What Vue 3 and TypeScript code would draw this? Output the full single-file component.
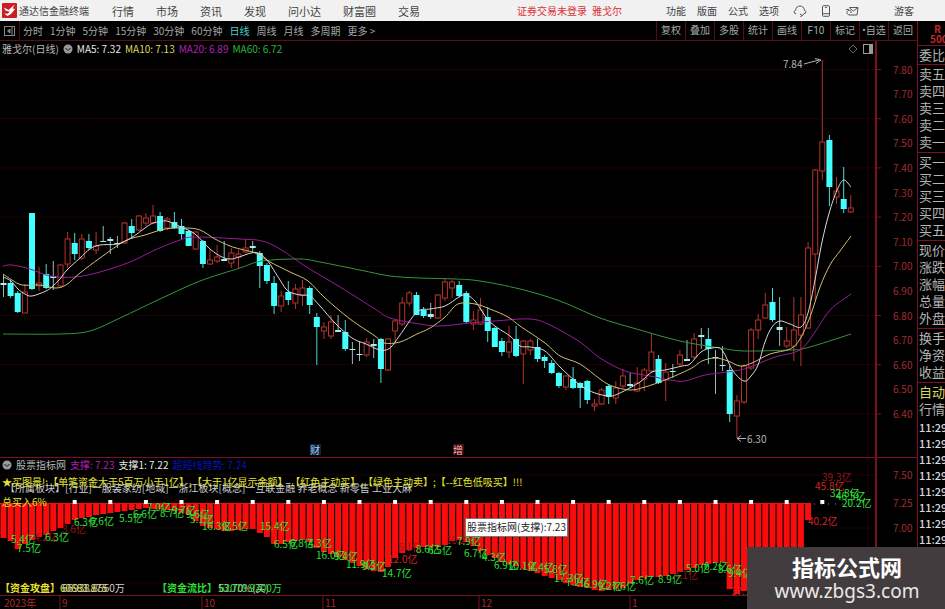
<script setup lang="ts">
type Point = [number, number]
type Kind = 'up' | 'down' | 'flat'
// kind, body top, body bottom, high, low
type Candle = [Kind, number, number, number, number]
type Tag = [number, number, string, 'g' | 'r' | 'd']

const menu = ['行情', '市场', '资讯', '发现', '问小达', '财富圈', '交易']
const account = ['功能', '版面', '公式', '选项']
const periods = ['分时', '1分钟', '5分钟', '15分钟', '30分钟', '60分钟', '日线', '周线', '月线', '多周期', '更多 >']
const tools = ['复权', '叠加', '多股', '统计', '画线', 'F10', '标记', '•自选', '返回']
const quotes = [
  ['委比'],
  ['卖五', '卖四', '卖三', '卖二', '卖一'],
  ['买一', '买二', '买三', '买四', '买五'],
  ['现价', '涨跌', '涨幅', '总量', '外盘'],
  ['换手', '净资', '收益'],
]
const ticks = Array.from({ length: 8 }, () => '11:29')

const step = 7.12
const cx = (i: number): number => Math.round((3.5 + i * step) * 10) / 10

const candles: Candle[] = [
  ['flat', 283, 285, 275, 297], ['down', 283, 296, 280, 298], ['down', 293, 312, 291, 313], ['up', 292, 313, 284, 313],
  ['down', 213, 289, 213, 290], ['up', 283, 286, 267, 291], ['down', 274, 288, 264, 289], ['flat', 276, 278, 261, 290],
  ['up', 265, 286, 264, 288], ['up', 239, 264, 232, 268], ['down', 243, 254, 233, 260], ['up', 239, 258, 234, 260],
  ['down', 241, 248, 234, 250], ['up', 246, 250, 232, 254], ['flat', 241, 242, 226, 242], ['flat', 239, 241, 237, 254],
  ['flat', 243, 244, 236, 248], ['up', 223, 243, 222, 244], ['down', 226, 233, 219, 238], ['up', 216, 230, 215, 231],
  ['up', 218, 223, 213, 226], ['up', 216, 223, 205, 224], ['down', 216, 231, 212, 232], ['up', 219, 228, 217, 230],
  ['down', 222, 228, 212, 229], ['down', 226, 234, 219, 239], ['down', 231, 246, 230, 246], ['up', 232, 249, 231, 250],
  ['down', 241, 264, 240, 268], ['up', 260, 264, 249, 265], ['up', 257, 261, 245, 263], ['flat', 259, 261, 241, 261],
  ['up', 253, 263, 248, 268], ['up', 254, 257, 250, 268], ['up', 248, 252, 239, 253], ['flat', 246, 248, 241, 252],
  ['down', 253, 266, 251, 288], ['down', 265, 281, 263, 284], ['down', 283, 306, 276, 314], ['up', 296, 306, 291, 312],
  ['down', 292, 300, 281, 305], ['up', 289, 303, 284, 309], ['up', 288, 295, 280, 306], ['down', 288, 305, 286, 314],
  ['down', 317, 327, 313, 365], ['up', 327, 331, 322, 339], ['up', 322, 336, 315, 339], ['flat', 330, 332, 315, 332],
  ['down', 332, 349, 320, 351], ['flat', 349, 350, 342, 364], ['flat', 354, 355, 341, 361], ['up', 342, 355, 338, 357],
  ['flat', 344, 346, 339, 358], ['down', 339, 369, 338, 383], ['up', 339, 370, 338, 371], ['up', 321, 331, 320, 342],
  ['up', 303, 324, 297, 326], ['up', 293, 303, 291, 306], ['down', 295, 315, 292, 315], ['down', 310, 316, 307, 318],
  ['flat', 314, 317, 303, 319], ['up', 295, 318, 294, 319], ['up', 282, 298, 278, 301], ['up', 282, 288, 280, 298],
  ['down', 285, 296, 281, 297], ['down', 293, 322, 291, 323], ['up', 320, 324, 311, 330], ['up', 310, 324, 298, 325],
  ['down', 317, 331, 307, 342], ['down', 328, 347, 327, 347], ['down', 341, 352, 338, 356], ['up', 342, 352, 326, 358],
  ['down', 339, 356, 326, 357], ['up', 341, 354, 340, 384], ['up', 341, 350, 339, 355], ['down', 347, 359, 339, 362],
  ['down', 357, 361, 355, 368], ['down', 363, 373, 360, 374], ['down', 373, 386, 372, 388], ['up', 376, 387, 375, 390],
  ['down', 379, 388, 367, 389], ['down', 383, 388, 382, 408], ['down', 381, 400, 380, 404], ['up', 404, 406, 399, 411],
  ['up', 390, 404, 388, 405], ['down', 386, 397, 384, 404], ['up', 388, 398, 381, 404], ['up', 376, 386, 369, 388],
  ['flat', 384, 386, 373, 388], ['up', 383, 391, 367, 392], ['up', 370, 379, 368, 391], ['up', 352, 371, 334, 373],
  ['down', 359, 383, 355, 384], ['up', 372, 380, 363, 401], ['flat', 371, 372, 364, 378], ['up', 355, 364, 350, 366],
  ['flat', 359, 361, 340, 361], ['up', 339, 357, 333, 359], ['flat', 335, 337, 328, 349], ['down', 339, 349, 328, 364],
  ['flat', 357, 358, 350, 394], ['flat', 365, 366, 346, 371], ['down', 370, 414, 366, 422], ['up', 401, 416, 395, 438],
  ['up', 366, 402, 364, 404], ['up', 330, 368, 328, 370], ['up', 320, 330, 314, 339], ['up', 305, 318, 293, 319],
  ['down', 302, 320, 288, 322], ['flat', 327, 330, 297, 346], ['up', 341, 346, 327, 348], ['up', 330, 346, 297, 361],
  ['up', 315, 335, 297, 366], ['up', 248, 328, 242, 329], ['up', 170, 254, 169, 300], ['up', 142, 171, 60, 180],
  ['down', 140, 187, 135, 206], ['up', 191, 197, 177, 204], ['down', 199, 209, 167, 213], ['up', 208, 212, 195, 213],
]

const ma5: Point[] = [[3, 277], [11, 281], [18, 289], [25, 294], [32, 296], [46, 291], [53, 286], [60, 279], [67, 270], [80, 258], [90, 249], [100, 245], [117, 244], [131, 238], [145, 228], [153, 223], [160, 222], [167, 221], [181, 227], [195, 234], [210, 249], [222, 257], [231, 259], [239, 257], [251, 253], [258, 253], [267, 260], [280, 280], [288, 291], [300, 295], [310, 296], [320, 306], [335, 323], [352, 338], [366, 344], [380, 350], [390, 348], [400, 335], [417, 312], [430, 309], [445, 306], [459, 297], [466, 295], [475, 301], [490, 322], [510, 336], [520, 346], [530, 347], [545, 351], [560, 367], [580, 385], [595, 393], [610, 396], [620, 393], [640, 382], [652, 372], [665, 370], [682, 366], [690, 364], [701, 352], [712, 348], [722, 350], [733, 371], [744, 381], [751, 376], [758, 365], [765, 342], [772, 327], [780, 321], [790, 324], [801, 327], [808, 313], [815, 280], [822, 242], [830, 210], [838, 188], [844, 180], [851, 187]]
const ma10: Point[] = [[3, 274], [12, 280], [22, 285], [40, 285], [55, 288], [66, 285], [80, 273], [100, 258], [125, 241], [145, 235], [165, 229], [185, 228], [200, 230], [215, 239], [230, 246], [240, 249], [255, 253], [270, 262], [290, 272], [308, 281], [325, 298], [350, 319], [375, 336], [384, 343], [400, 342], [417, 334], [430, 328], [445, 317], [458, 304], [475, 304], [490, 309], [508, 317], [520, 326], [545, 343], [560, 356], [580, 364], [600, 379], [612, 386], [630, 390], [645, 387], [665, 380], [690, 369], [702, 361], [715, 358], [728, 361], [740, 366], [752, 363], [770, 354], [790, 349], [800, 339], [810, 317], [820, 287], [830, 265], [840, 251], [851, 236]]
const ma20: Point[] = [[3, 266], [12, 265], [30, 269], [50, 276], [75, 277], [100, 272], [130, 262], [155, 250], [180, 240], [195, 237], [240, 239], [262, 241], [280, 249], [305, 266], [340, 287], [375, 309], [390, 318], [420, 324], [440, 326], [470, 323], [495, 321], [530, 319], [550, 325], [580, 342], [600, 358], [625, 371], [650, 376], [670, 380], [685, 381], [705, 375], [735, 371], [750, 367], [775, 357], [800, 350], [815, 332], [830, 310], [851, 294]]
const ma60: Point[] = [[3, 334], [60, 334], [90, 331], [120, 318], [160, 299], [200, 281], [240, 268], [262, 261], [300, 259], [320, 262], [360, 270], [390, 276], [420, 278], [455, 279], [480, 281], [520, 289], [560, 301], [600, 318], [640, 330], [680, 341], [720, 348], [745, 351], [790, 350], [802, 349], [820, 344], [851, 334]]

const toPath = (pts: Point[]): string => {
  let d = `M${pts[0][0]} ${pts[0][1]}`
  for (let i = 0; i < pts.length - 1; i++) {
    const a = pts[Math.max(0, i - 1)]
    const b = pts[i]
    const c = pts[i + 1]
    const e = pts[Math.min(pts.length - 1, i + 2)]
    d += `C${b[0] + (c[0] - a[0]) / 6} ${b[1] + (c[1] - a[1]) / 6} ${c[0] - (e[0] - b[0]) / 6} ${c[1] - (e[1] - b[1]) / 6} ${c[0]} ${c[1]}`
  }
  return d
}

const lines = [
  { id: 'ma60', d: toPath(ma60) },
  { id: 'ma20', d: toPath(ma20) },
  { id: 'ma10', d: toPath(ma10) },
  { id: 'ma5', d: toPath(ma5) },
]

const prices = Array.from({ length: 15 }, (_, i) => ({ label: (7.8 - i * 0.1).toFixed(2), y: 69.5 + i * 24.6, line: i % 2 === 0 }))

const floor: Point[] = [[0, 537], [10, 540], [17, 549], [24, 545], [32, 540], [46, 535], [60, 528], [75, 520], [95, 515], [120, 512], [146, 508], [170, 510], [188, 514], [202, 526], [225, 531], [252, 529], [265, 535], [275, 545], [305, 539], [320, 550], [345, 560], [372, 571], [384, 573], [392, 561], [404, 551], [420, 547], [440, 547], [455, 540], [464, 540], [480, 551], [500, 561], [530, 571], [555, 579], [580, 587], [600, 591], [622, 588], [640, 578], [665, 576], [690, 569], [705, 564], [728, 562], [730, 594], [738, 594], [745, 590], [803, 585], [804, 520], [812, 520]]
const floorAt = (x: number): number => {
  const k = floor.findIndex((p) => p[0] >= x)
  if (k <= 0) return floor[0][1]
  const [x0, y0] = floor[k - 1]
  const [x1, y1] = floor[k]
  return Math.round(y0 + ((x - x0) / (x1 - x0)) * (y1 - y0))
}
const bars = Array.from({ length: 114 }, (_, i) => ({ x: cx(i) - 3, h: floorAt(cx(i)) - 503 }))
const marks = Array.from({ length: 22 }, (_, i) => cx(10 + i * 5) - 2)

const tags: Tag[] = [
  [11, 543, '5.4亿', 'g'], [17, 552, '7.5亿', 'g'], [34, 541, '4.2亿', 'd'], [45, 541, '6.3亿', 'g'], [62, 533, '3.6亿', 'd'],
  [74, 526, '6.3亿', 'g'], [90, 525, '6.6亿', 'g'], [119, 522, '5.5亿', 'g'], [133, 518, '6.6亿', 'g'], [147, 511, '7.0亿', 'g'],
  [160, 517, '8.7亿', 'g'], [172, 514, '9.7亿', 'g'], [186, 518, '9.6亿', 'g'], [190, 523, '5.1亿', 'g'], [202, 530, '16.3亿', 'g'],
  [224, 530, '8.5亿', 'g'], [260, 530, '15.4亿', 'g'], [274, 548, '6.5亿', 'g'], [290, 547, '6.8亿', 'g'], [308, 547, '4.3亿', 'g'],
  [316, 559, '16.0亿', 'g'], [334, 560, '9.4亿', 'g'], [346, 568, '11.9亿', 'g'], [362, 570, '9.3亿', 'g'], [382, 577, '14.7亿', 'g'],
  [388, 563, '12.0亿', 'r'], [398, 551, '6.1亿', 'd'], [416, 553, '8.6亿', 'g'], [428, 554, '6.5亿', 'g'], [446, 544, '10.2亿', 'd'],
  [457, 545, '7.9亿', 'g'], [464, 557, '6.7亿', 'g'], [482, 561, '4.3亿', 'g'], [494, 569, '6.9亿', 'g'], [508, 570, '10.1亿', 'g'],
  [530, 571, '4.4亿', 'g'], [544, 573, '5.8亿', 'g'], [554, 582, '17.3亿', 'g'], [566, 586, '7.2亿', 'g'], [584, 588, '6.9亿', 'g'],
  [598, 590, '9.2亿', 'g'], [612, 590, '7.6亿', 'g'], [630, 584, '7.6亿', 'g'], [658, 583, '8.9亿', 'g'], [674, 579, '4.1亿', 'd'],
  [686, 572, '5.0亿', 'g'], [704, 570, '6.2亿', 'g'], [718, 573, '8.6亿', 'g'], [728, 577, '9.4亿', 'g'], [731, 595, '17.1亿', 'r'],
  [822, 481, '39.3亿', 'd'], [815, 490, '45.8亿', 'r'], [830, 497, '32.8亿', 'g'], [836, 500, '46.5亿', 'g'], [842, 507, '20.2亿', 'g'],
  [808, 525, '40.2亿', 'r'],
]
const months = [
  { x: 60, label: '9' }, { x: 202, label: '10' }, { x: 323, label: '11' }, { x: 479, label: '12' }, { x: 630, label: '1' },
]
</script>

<template>
  <div class="terminal">
    <header class="topbar">
      <svg class="logo" viewBox="0 0 15 15" aria-hidden="true">
        <rect width="15" height="15" rx="1" fill="#c91e22" />
        <path d="M2 4.5 6.5 7 12.8 1.5 10.6 5.5 13 6 9 11 5.4 13 2.2 10.5 5.5 10.7 7.8 8.7 3.4 7.6Z" fill="#fff" />
      </svg>
      <span class="brand">通达信金融终端</span>
      <nav class="menu"><button v-for="m in menu" :key="m" type="button">{{ m }}</button></nav>
      <div class="login"><span>证券交易未登录</span><span>雅戈尔</span></div>
      <nav class="account">
        <button v-for="a in account" :key="a" type="button">{{ a }}</button>
      </nav>
      <div class="icons">
        <button type="button" aria-label="客服">
          <svg width="14" height="12" viewBox="0 0 14 12"><path d="M3 8.5H1.8L1 6.8 2.6 5C3 2.4 4.7 1 7 1s4 1.4 4.4 4L13 6.8 12.2 8.5H11L9.5 10.5M7 9.2l2.5 1.3L7.200 11.8" /></svg>
        </button>
        <button type="button" aria-label="手机">
          <svg width="10" height="12" viewBox="0 0 10 12"><rect x="1.5" y=".7" width="7" height="10.6" rx="1" /><path d="M1.5 8.7h7M4 2.4h2" /></svg>
        </button>
        <button type="button" aria-label="邮件">
          <svg width="14" height="12" viewBox="0 0 14 12"><path d="M4.500 2.500h8.500l-1 7.500H5C3 10 2 9 2 7.500S3.200 5.500 4.500 5.500s2 1 1.500 2.500M4.500 3l3.800 3L13 2.500M1 4.500h3" /></svg>
        </button>
      </div>
      <button class="guest" type="button">游客</button>
    </header>

    <div class="body">
      <main class="charts">
        <div class="toolbar">
          <button class="toggle" type="button" aria-label="侧栏">
            <svg width="11" height="10" viewBox="0 0 11 10"><rect x=".5" y=".5" width="10" height="9" fill="none" stroke="#888" /><path d="M8 1v8M6 3v4L3.5 5Z" fill="#888" stroke="#888" /></svg>
          </button>
          <nav class="periods">
            <button v-for="p in periods" :key="p" type="button" :class="{ active: p === '日线' }">{{ p }}</button>
          </nav>
          <nav class="tools"><button v-for="t in tools" :key="t" type="button">{{ t }}</button></nav>
        </div>

        <section class="panel">
          <div class="legend">
            <span class="name">雅戈尔(日线)</span>
            <svg class="dot" viewBox="0 0 10 10"><circle cx="5" cy="5" r="4.5" fill="#999" /><path d="M2.5 4 5 6.5 7.5 4" fill="none" stroke="#111" /></svg>
            <span class="white">MA5: 7.32</span><span class="yellow">MA10: 7.13</span><span class="magenta">MA20: 6.89</span><span class="green">MA60: 6.72</span>
            <span class="corner">
              <svg viewBox="0 0 26 10"><path d="M5 1 9 5 5 9 1 5Z" fill="none" stroke="#666" /><rect x="15.5" y=".5" width="9" height="9" fill="none" stroke="#999" /><path d="M21 1v8h3V1Z" fill="#999" /></svg>
            </span>
          </div>
          <svg class="plot" viewBox="0 57 917 400" role="img" aria-label="雅戈尔日线">
            <g class="grid">
              <template v-for="p in prices" :key="p.label">
                <line v-if="p.line" x1="0" x2="875" :y1="p.y" :y2="p.y" />
              </template>
              <line x1="868" x2="868" y1="57" y2="457" />
            </g>
            <g class="axis">
              <line class="edge" x1="876" x2="876" y1="41" y2="457" />
              <template v-for="p in prices" :key="p.label">
                <line v-if="p.line" x1="876" x2="881" :y1="p.y" :y2="p.y" />
                <text x="893" :y="p.y + 4">{{ p.label }}</text>
              </template>
            </g>
            <g v-for="(c, i) in candles" :key="i" :class="c[0]">
              <line v-if="c[0] !== 'up'" :x1="cx(i)" :x2="cx(i)" :y1="c[3]" :y2="c[4]" />
              <path v-else :d="`M${cx(i)} ${c[3]}V${c[1]}M${cx(i)} ${c[2]}V${c[4]}`" />
              <rect v-if="c[0] === 'up'" :x="cx(i) - 2.5" :y="c[1]" width="5" :height="c[2] - c[1]" />
              <rect v-else :x="cx(i) - 3" :y="c[1]" width="6" :height="c[2] - c[1]" />
            </g>
            <path v-for="l in lines" :key="l.id" :class="['ma', l.id]" :d="l.d" />
            <g class="note">
              <text x="783" y="68">7.84</text>
              <path d="M804 64 819 60M815 58.5 821 60 816 63.5" />
              <text x="747" y="443">6.30</text>
              <path d="M746 438.5H737M741 435.5 737 438.5 741 441.5" />
            </g>
            <g class="event">
              <rect x="310" y="444" width="11" height="11" fill="#0c2342" /><text x="310" y="454" fill="#a9d4f2">财</text>
              <rect x="453" y="444" width="11" height="11" fill="#430b0b" /><text x="453" y="454" fill="#f2bcbc">增</text>
            </g>
          </svg>
        </section>

        <section class="panel lower">
          <div class="legend">
            <svg class="dot" viewBox="0 0 10 10"><circle cx="5" cy="5" r="4.5" fill="#999" /><path d="M2.5 4 5 6.5 7.5 4" fill="none" stroke="#111" /></svg>
            <span class="name">股票指标网</span><span class="magenta">支撑: 7.23</span><span class="white">支撑1: 7.22</span><span class="blue">超短线趋势: 7.24</span>
          </div>
          <svg class="plot" viewBox="0 472 917 137" role="img" aria-label="资金指标">
            <g class="grid">
              <line x1="0" x2="875" y1="475" y2="475" /><line x1="0" x2="875" y1="528" y2="528" /><line x1="0" x2="875" y1="583" y2="583" />
              <line x1="868" x2="868" y1="458" y2="596" />
            </g>
            <g class="axis">
              <line class="edge" x1="876" x2="876" y1="458" y2="609" />
              <text x="893" y="479">7.50</text><text x="893" y="507">7.25</text><text x="893" y="532">7.00</text>
              <line x1="0" x2="917" y1="595.5" y2="595.5" />
              <text x="4" y="607">2023年</text>
              <template v-for="m in months" :key="m.label">
                <line :x1="m.x" :x2="m.x" y1="596" y2="609" /><text :x="m.x + 2" y="607">{{ m.label }}</text>
              </template>
            </g>
            <rect class="band" x="0" y="503" width="810" height="1" />
            <rect v-for="(b, i) in bars" :key="i" class="bar" :x="b.x" y="503" width="6" :height="b.h" />
            <rect v-for="x in marks" :key="x" class="mark" :x="x" y="500" width="4" height="4" />
            <path class="dots" d="M814 504H866" />
            <text v-for="(t, i) in tags" :key="i" :class="['tag', t[3]]" :x="t[0]" :y="t[1]">{{ t[2] }}</text>
            <g class="info">
              <text x="5" y="492" class="pale">【所属板块】[行业]一服装家纺[地域]一浙江板块[概念]一互联金融 养老概念 新零售 工业大麻</text>
              <text x="2" y="486" class="gold">★买图景!:【单笔资金大于5百万小于1亿】,【大于1亿显示金额】,【红色主动买】,【绿色主动卖】;【--红色低吸买】!!!</text>
              <text x="2" y="506" class="gold">总买入6%</text>
              <text x="0" y="592" class="gold strong">【资金攻盘】</text>
              <text x="60" y="592" class="gold">60683.875</text><text x="62" y="592" class="pale">66938.8560万</text>
              <text x="157" y="592" class="lime strong">【资金流比】</text>
              <text x="218" y="592" class="pale">53.70%(买)</text><text x="219" y="592" class="lime">62070.9200万</text>
            </g>
            <g class="tip"><rect x="465.5" y="518.5" width="102" height="18" /><text x="467" y="531">股票指标网(支撑):7.23</text></g>
          </svg>
        </section>
      </main>

      <aside class="quotes">
        <div class="code"><b>R</b><b>500</b></div>
        <ul v-for="(g, i) in quotes" :key="i"><li v-for="q in g" :key="q">{{ q }}</li></ul>
        <ul><li class="auto">自动</li><li>行情</li></ul>
        <ol><li v-for="(t, i) in ticks" :key="i">{{ t }}</li></ol>
      </aside>
    </div>

    <div class="watermark"><strong>指标公式网</strong><span>www.zbgs3.com</span></div>
  </div>
</template>

<style>
body {
  margin: 0;
  background: #000;
}
</style>

<style scoped>
.terminal {
  position: relative;
  min-height: 100vh;
  overflow: hidden;
  background: #000;
  color: #b8b8b8;
  font: 10px/14px "Noto Sans CJK SC", sans-serif;
}
button {
  padding: 0;
  border: 0;
  background: none;
  color: inherit;
  font: inherit;
  white-space: nowrap;
  cursor: pointer;
}
.topbar {
  display: flex;
  align-items: center;
  height: 21px;
  background: #f1f1f1;
  color: #444;
  white-space: nowrap;
}
.logo {
  width: 15px;
  height: 15px;
  margin: 0 2px;
}
.menu {
  display: flex;
  gap: 22px;
  margin-left: 23px;
  font-size: 11px;
}
.login {
  display: flex;
  gap: 5px;
  margin: 0 44px 0 auto;
  color: #d8343a;
}
.account {
  display: flex;
  gap: 11px;
}
.icons {
  display: flex;
  align-items: center;
  gap: 14px;
  margin: 0 35px 0 14px;
}
.icons button,
.toggle {
  display: flex;
}
.icons svg {
  fill: none;
  stroke: #555;
}
.guest {
  margin-right: 31px;
}
.body {
  display: grid;
  grid-template-columns: minmax(0, 1fr) 28px;
}
.toolbar {
  display: flex;
  align-items: stretch;
  height: 20px;
  box-sizing: border-box;
  border-bottom: 1px solid #5a0c14;
  color: #a8a8a8;
}
.toggle {
  align-items: center;
  width: 20px;
  box-sizing: border-box;
  padding-left: 4px;
  border-right: 1px solid #5a0c14;
}
.periods {
  display: flex;
  gap: 7px;
  padding-left: 3px;
}
.periods .active {
  color: #4fd0d0;
}
.tools {
  display: flex;
  margin-left: auto;
  font-family: Roboto, "Noto Sans CJK SC", sans-serif;
}
.tools button {
  width: 29px;
  box-sizing: border-box;
  border-left: 1px solid #5a0c14;
}
.panel {
  display: flex;
  flex-direction: column;
}
.lower {
  border-top: 1px solid #7a1020;
}
.legend {
  display: flex;
  align-items: center;
  gap: 4px;
  height: 16px;
  padding-left: 2px;
  white-space: nowrap;
}
.lower .legend {
  height: 14px;
}
.dot {
  width: 10px;
  height: 10px;
}
.white {
  color: #e8e8e8;
}
.yellow {
  color: #d8d85c;
}
.magenta {
  color: #b020b0;
}
.green {
  color: #2cb33c;
}
.blue {
  color: #0a10b8;
}
.corner {
  display: flex;
  margin: 0 43px 0 auto;
}
.corner svg {
  width: 26px;
  height: 10px;
}
.plot {
  display: block;
  width: 100%;
  height: auto;
  overflow: visible;
}
.plot text {
  font-family: "Noto Sans CJK SC", sans-serif;
  font-size: 10px;
}
.grid line {
  stroke: #380408;
  stroke-dasharray: 1 1;
}
.axis line {
  stroke: #7a1020;
}
.axis .edge {
  stroke-width: 2px;
}
.axis text {
  fill: #a52a2e;
}
.up {
  fill: #000;
  stroke: #b8322c;
}
.down {
  fill: #4ff;
}
.down line {
  stroke: #4fd8d8;
}
.flat {
  fill: #a8f0f0;
}
.flat line {
  stroke: #9ab8b8;
}
.ma {
  fill: none;
}
.ma5 {
  stroke: #d8d8d8;
}
.ma10 {
  stroke: #d0c074;
}
.ma20 {
  stroke: #9a1c9a;
}
.ma60 {
  stroke: #35963a;
}
.note text {
  fill: #b4b4b4;
}
.note path {
  fill: none;
  stroke: #b4b4b4;
}
.band,
.bar {
  fill: #f80c0c;
}
.mark {
  fill: #fff;
}
.dots {
  stroke: #888;
  stroke-dasharray: 1 6;
}
.g,
.lime {
  fill: #2ee03a;
}
.r {
  fill: #d42424;
}
.d {
  fill: #96161a;
}
.gold {
  fill: #e4e430;
}
.pale {
  fill: #cfcfcf;
}
.strong {
  font-weight: 700;
}
.tip rect {
  fill: #fff;
  stroke: #777;
}
.tip text {
  fill: #222;
}
.quotes {
  overflow: hidden;
  border-left: 1px solid #7a1020;
  color: #b4b4b4;
  font-size: 13px;
  line-height: 17px;
  white-space: nowrap;
}
.code {
  display: flex;
  flex-direction: column;
  height: 24px;
  box-sizing: border-box;
  padding: 3px 0 0 12px;
  color: #c4282e;
  font-size: 10px;
  line-height: 10px;
}
.code b:first-child {
  padding-left: 4px;
}
.quotes ul,
.quotes ol {
  margin: 0;
  padding: 0 0 2px 1px;
  border-top: 1px solid #7a1020;
  list-style: none;
}
.quotes ul:nth-of-type(1) {
  padding-bottom: 1px;
}
.quotes ol {
  border-top: 0;
  color: #d8d8d8;
  font-size: 11px;
  font-weight: 500;
  line-height: 16px;
}
.quotes .auto {
  color: #d8d85c;
}
.watermark {
  position: absolute;
  right: 0;
  bottom: 0;
  display: flex;
  flex-direction: column;
  align-items: center;
  width: 198px;
  height: 62px;
  box-sizing: border-box;
  padding: 6px 0 0 2px;
  background: #433c3e;
  color: #fff;
}
.watermark strong {
  font-size: 22px;
  line-height: 26px;
}
.watermark span {
  color: #e8e8e8;
  font: 19px/24px "Noto Sans", sans-serif;
}
</style>
